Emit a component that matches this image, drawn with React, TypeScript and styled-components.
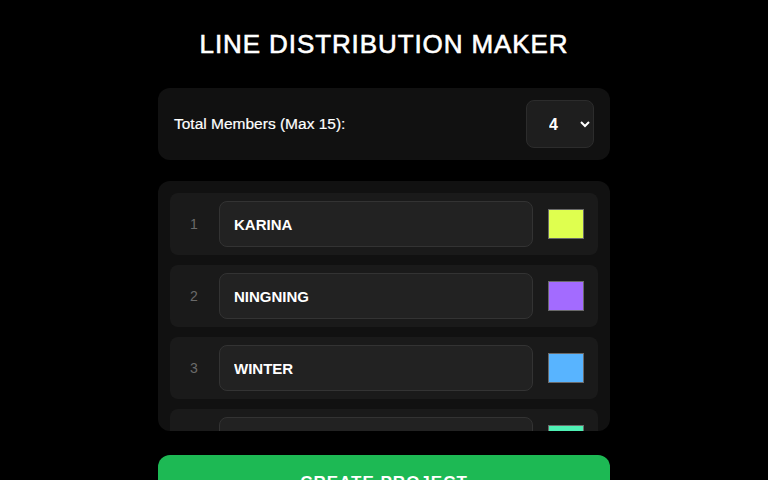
import React, { useState } from 'react'
import styled, { createGlobalStyle } from 'styled-components'

const GlobalStyle = createGlobalStyle`
    * {
        box-sizing: border-box;
    }

    body {
        margin: 0;
        background: #000;
        color: #fff;
        font-family: 'Liberation Sans', Arial, sans-serif;
    }
`

const Page = styled.main`
    width: 452px;
    margin: 0 auto;
    padding-top: 30px;
    display: flex;
    flex-direction: column;
`

const Title = styled.h1`
    margin: 0 0 30px;
    text-align: center;
    font-size: 26px;
    font-weight: 500;
    letter-spacing: 0.9px;
    line-height: 28px;
    -webkit-text-stroke: 0.6px #fff;
`

const Card = styled.section`
    background: #111;
    border-radius: 12px;
`

const SettingsCard = styled(Card)`
    height: 72px;
    padding: 0 16px;
    display: flex;
    align-items: center;
    justify-content: space-between;
    margin-bottom: 21px;
`

const Label = styled.label`
    font-size: 15.5px;
    font-weight: 500;
    -webkit-text-stroke: 0.2px #fff;
`

const Select = styled.select`
    width: 68px;
    height: 48px;
    padding: 0 12px 0 18px;
    background: #1e1e1e;
    color: #fff;
    border: 1px solid #2c2c2c;
    border-radius: 8px;
    font-family: inherit;
    font-size: 16px;
    font-weight: 600;
    outline: none;
`

const MemberList = styled(Card)`
    height: 250px;
    padding: 12px;
    overflow-y: auto;
    display: flex;
    flex-direction: column;
    gap: 10px;
    scrollbar-width: none;
    margin-bottom: 24px;

    &::-webkit-scrollbar {
        display: none;
    }
`

const Row = styled.div`
    flex-shrink: 0;
    height: 62px;
    background: #1a1a1a;
    border-radius: 8px;
    padding: 8px 14px 8px 12px;
    display: flex;
    align-items: center;
    gap: 13px;
`

const Index = styled.span`
    width: 24px;
    text-align: center;
    color: #6a6a6a;
    font-size: 14px;
`

const NameInput = styled.input`
    flex: 1;
    height: 46px;
    padding: 0 14px;
    background: #222;
    color: #fff;
    border: 1px solid #333;
    border-radius: 8px;
    font-family: inherit;
    font-size: 15px;
    font-weight: 600;
    outline: none;
`

const ColorInput = styled.input`
    width: 36px;
    height: 30px;
    margin-left: 2px;
    padding: 0;
    border: none;
    background: none;
    cursor: pointer;

    &::-webkit-color-swatch-wrapper {
        padding: 0;
    }

    &::-webkit-color-swatch {
        border: 1px solid #6a6a6a;
        border-radius: 0;
    }
`

const CreateButton = styled.button`
    height: 56px;
    background: #1db954;
    color: #fff;
    border: none;
    border-radius: 12px;
    font-family: inherit;
    font-size: 17px;
    font-weight: 700;
    letter-spacing: 1px;
    cursor: pointer;
`

type Member = { name: string; color: string }

const initialMembers: Member[] = [
    { name: 'KARINA', color: '#dfff4f' },
    { name: 'NINGNING', color: '#a36bff' },
    { name: 'WINTER', color: '#58b4ff' },
    { name: 'GISELLE', color: '#4ff0b4' },
]

const App: React.FC = () => {
    const [count, setCount] = useState(4)
    const [members, setMembers] = useState(initialMembers)

    const update = (i: number, key: keyof Member, value: string) => {
        setMembers(prev => prev.map((m, idx) => (idx === i ? { ...m, [key]: value } : m)))
    }

    return (
        <>
            <GlobalStyle />
            <Page>
                <Title>LINE DISTRIBUTION MAKER</Title>

                <SettingsCard>
                    <Label htmlFor="total">Total Members (Max 15):</Label>
                    <Select id="total" value={count} onChange={e => setCount(Number(e.target.value))}>
                        {Array.from({ length: 15 }, (_, i) => (
                            <option key={i + 1} value={i + 1}>
                                {i + 1}
                            </option>
                        ))}
                    </Select>
                </SettingsCard>

                <MemberList>
                    {members.slice(0, count).map((m, i) => (
                        <Row key={i}>
                            <Index>{i + 1}</Index>
                            <NameInput value={m.name} onChange={e => update(i, 'name', e.target.value)} />
                            <ColorInput
                                type="color"
                                value={m.color}
                                onChange={e => update(i, 'color', e.target.value)}
                            />
                        </Row>
                    ))}
                </MemberList>

                <CreateButton>CREATE PROJECT</CreateButton>
            </Page>
        </>
    )
}

export default App
